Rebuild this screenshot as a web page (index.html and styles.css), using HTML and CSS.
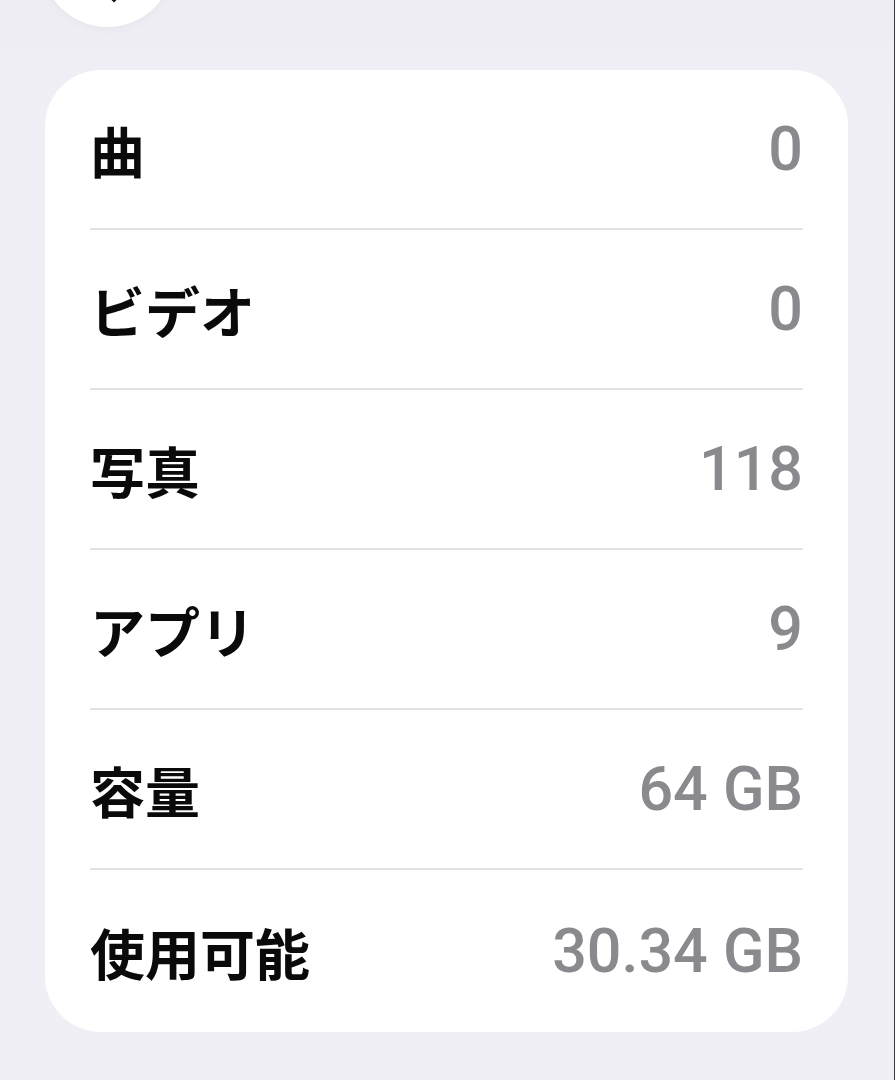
FILE: index.html
```
<!DOCTYPE html>
<html lang="ja">
<head>
<meta charset="utf-8">
<link rel="stylesheet" href="styles.css">
</head>
<body>
<div class="screen">
  <div class="header">
    <div class="back-btn">
      <svg class="back-icon" width="14" height="10" viewBox="0 0 14 10"><path d="M2 0 L7 5 L12 0" fill="none" stroke="#111" stroke-width="5" stroke-linecap="round"/></svg>
    </div>
  </div>
  <div class="card">
    <div class="row"><span class="label">曲</span><span class="value">0</span></div>
    <div class="row"><span class="label">ビデオ</span><span class="value">0</span></div>
    <div class="row"><span class="label">写真</span><span class="value">118</span></div>
    <div class="row"><span class="label">アプリ</span><span class="value">9</span></div>
    <div class="row"><span class="label">容量</span><span class="value">64 GB</span></div>
    <div class="row last"><span class="label">使用可能</span><span class="value">30.34 GB</span></div>
  </div>
</div>
</body>
</html>
```
FILE: styles.css
```
html, body {
  margin: 0;
  padding: 0;
}
body {
  width: 895px;
  height: 1080px;
  overflow: hidden;
  background: #f0eff6;
}
.screen {
  width: 894px;
  height: 1080px;
  border-right: 1px solid #3a3a3c;
  background: linear-gradient(#ededf3 0, #f0eff6 120px, #f0eff6 100%);
  overflow: hidden;
}
.header {
  height: 70px;
  display: flex;
  align-items: flex-start;
}
.back-btn {
  width: 133px;
  height: 133px;
  margin-top: -106px;
  margin-left: 41px;
  flex: none;
  border-radius: 50%;
  background: #ffffff;
  box-shadow: 0 2px 10px rgba(0,0,0,0.04);
  display: flex;
  align-items: flex-end;
  justify-content: center;
  box-sizing: border-box;
}
.back-icon {
  margin-bottom: 23px;
  margin-left: 12px;
}
.card {
  margin-left: 45px;
  width: 803px;
  height: 962px;
  background: #ffffff;
  border-radius: 56px;
  display: flex;
  flex-direction: column;
}
.row {
  margin: 0 45px;
  height: 160px;
  box-sizing: border-box;
  border-bottom: 2px solid #e2e2e6;
  display: flex;
  align-items: center;
  justify-content: space-between;
}
.row.last {
  height: 162px;
  border-bottom: none;
}
.label {
  font-family: "Noto Sans CJK JP", "Noto Sans", sans-serif;
  font-weight: 700;
  font-size: 55px;
  color: #0a0a0a;
  line-height: 1;
}
.value {
  font-family: Roboto, "Liberation Sans", sans-serif;
  font-weight: 500;
  font-size: 61px;
  color: #8a8a8e;
  line-height: 1;
}
```
